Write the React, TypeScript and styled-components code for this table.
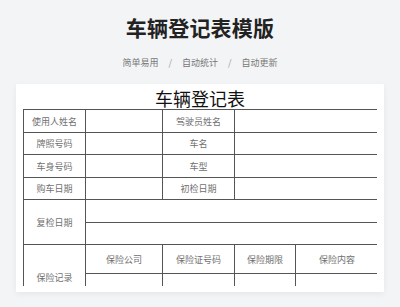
import React from 'react';
import styled, { createGlobalStyle } from 'styled-components';

const GlobalStyle = createGlobalStyle`
    body {
        margin: 0;
        background-color: #F3F4F6;
        font-family: "Noto Sans CJK SC", "Noto Sans", sans-serif;
    }
`;

const Page = styled.div`
    width: 400px;
    height: 307px;
    overflow: hidden;
    display: flex;
    flex-direction: column;
    align-items: center;
`;

const Title = styled.h1`
    margin: 13px 0 0;
    height: 28px;
    line-height: 28px;
    font-size: 21px;
    font-weight: 700;
    color: #222;
    letter-spacing: 0.2px;
`;

const Tags = styled.div`
    margin-top: 15px;
    display: flex;
    align-items: center;
    font-size: 9px;
    line-height: 14px;
    color: #777;
    & > i {
        font-style: normal;
        margin: 0 10px;
        color: #999;
    }
`;

const Paper = styled.div`
    margin-top: 14px;
    width: 368px;
    height: 208px;
    flex-shrink: 0;
    box-sizing: border-box;
    background-color: #FFF;
    box-shadow: 0 2px 6px rgba(0, 0, 0, 0.06);
    padding: 0 7px 6px;
    display: flex;
    flex-direction: column;
`;

const SheetTitle = styled.div`
    height: 25px;
    line-height: 28px;
    text-align: center;
    font-size: 18px;
    color: #111;
`;

const Clip = styled.div`
    flex: 1;
    overflow: hidden;
`;

const Sheet = styled.table`
    width: 355px;
    table-layout: fixed;
    border-collapse: collapse;
    & td {
        border: 1px solid #555;
        padding: 0;
        text-align: center;
        font-size: 9px;
        color: #707070;
    }
`;

const Row = styled.tr<{ h: number }>`
    height: ${p => p.h}px;
`;

const baseRows = [
    ['使用人姓名', '驾驶员姓名'],
    ['牌照号码', '车名'],
    ['车身号码', '车型'],
    ['购车日期', '初检日期'],
];

const App = () => {
    return (
        <Page>
            <GlobalStyle />
            <Title>车辆登记表模版</Title>
            <Tags>
                简单易用<i>/</i>自动统计<i>/</i>自动更新
            </Tags>
            <Paper>
                <SheetTitle>车辆登记表</SheetTitle>
                <Clip>
                    <Sheet>
                        <colgroup>
                            <col style={{ width: 62 }} />
                            <col style={{ width: 77 }} />
                            <col style={{ width: 72 }} />
                            <col style={{ width: 61 }} />
                            <col style={{ width: 83 }} />
                        </colgroup>
                        <tbody>
                            {baseRows.map(([a, b], i) => (
                                <Row h={i % 2 === 0 ? 23 : 22} key={a}>
                                    <td>{a}</td>
                                    <td></td>
                                    <td>{b}</td>
                                    <td colSpan={2}></td>
                                </Row>
                            ))}
                            <Row h={23}>
                                <td rowSpan={2}>复检日期</td>
                                <td colSpan={4}></td>
                            </Row>
                            <Row h={22}>
                                <td colSpan={4}></td>
                            </Row>
                            <Row h={29}>
                                <td rowSpan={2}>保险记录</td>
                                <td>保险公司</td>
                                <td>保险证号码</td>
                                <td>保险期限</td>
                                <td>保险内容</td>
                            </Row>
                            <Row h={37}>
                                <td></td>
                                <td></td>
                                <td></td>
                                <td></td>
                            </Row>
                        </tbody>
                    </Sheet>
                </Clip>
            </Paper>
        </Page>
    );
};

export default App;
